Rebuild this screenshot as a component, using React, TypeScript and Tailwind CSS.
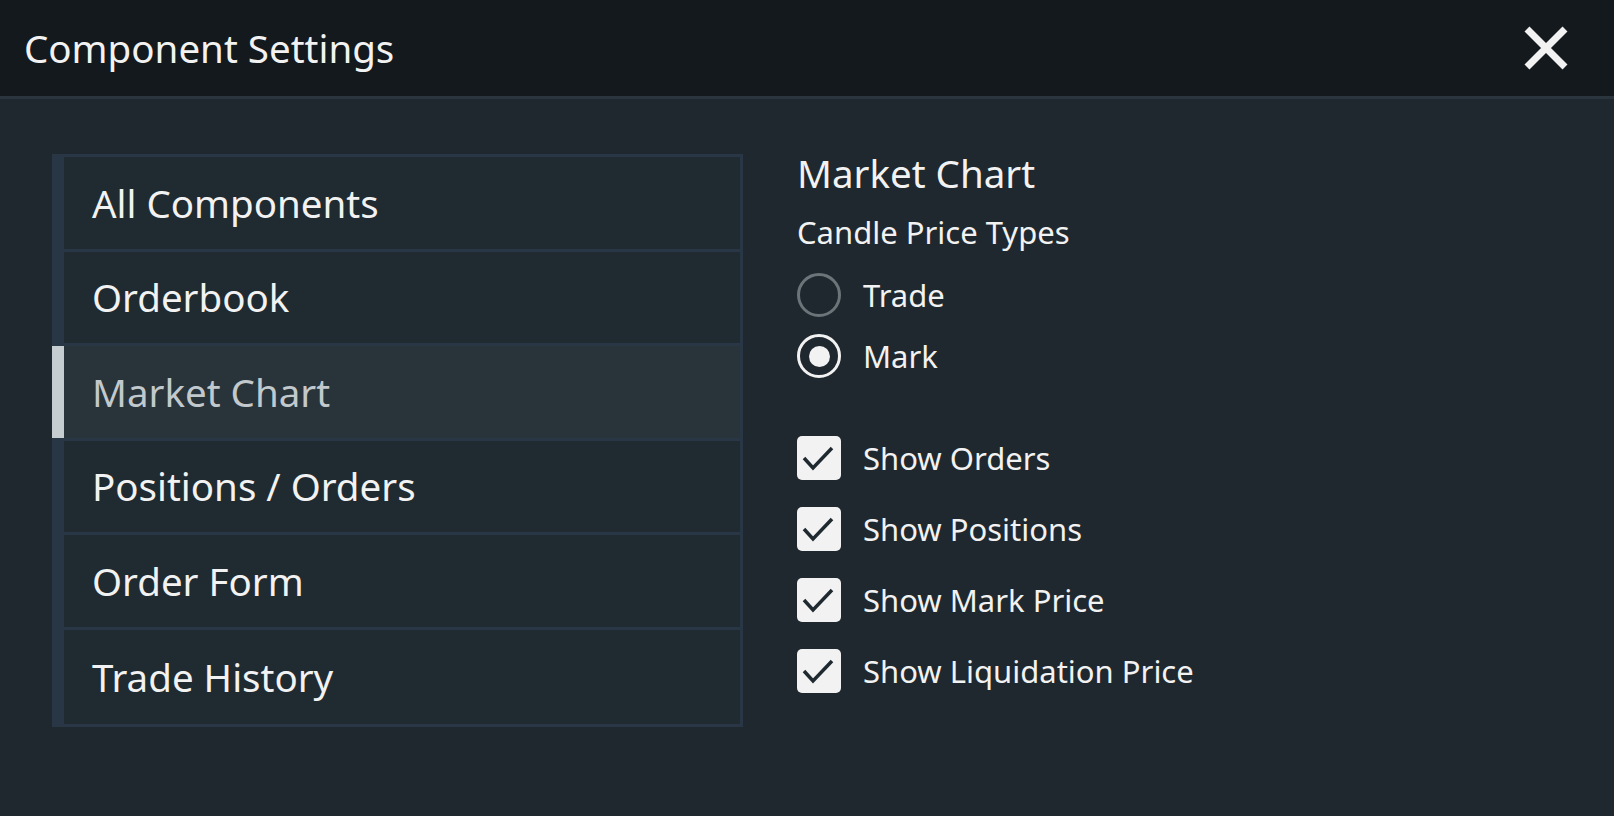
import React from "react";

const items = [
  "All Components",
  "Orderbook",
  "Market Chart",
  "Positions / Orders",
  "Order Form",
  "Trade History",
];

const toggles = [
  "Show Orders",
  "Show Positions",
  "Show Mark Price",
  "Show Liquidation Price",
];

const CloseIcon = () => (
  <svg width="46" height="46" viewBox="0 0 46 46" fill="none">
    <path d="M4 4 L42 42 M42 4 L4 42" stroke="#f2f2f2" strokeWidth="7" />
  </svg>
);

const Radio = ({ checked, label }: { checked: boolean; label: string }) => (
  <div className="flex h-[44px] items-center gap-[22px]">
    <div
      className={
        checked
          ? "flex size-[44px] items-center justify-center rounded-full border-[3px] border-[#f2f2f2]"
          : "size-[44px] rounded-full border-[3px] border-[#6b7478]"
      }
    >
      {checked && <div className="size-[21px] rounded-full bg-[#f2f2f2]" />}
    </div>
    <span className="text-[31px] leading-none text-[#f2f2f2]">{label}</span>
  </div>
);

const Checkbox = ({ label }: { label: string }) => (
  <div className="flex h-[44px] items-center gap-[22px]">
    <div className="size-[44px] rounded-[5px] bg-[#f2f2f2]">
      <svg width="44" height="44" viewBox="0 0 44 44" fill="none">
        <path d="M7 22 L16 32 L35 12" stroke="#1f2930" strokeWidth="3.5" />
      </svg>
    </div>
    <span className="text-[31px] leading-none text-[#f2f2f2]">{label}</span>
  </div>
);

export default function App() {
  const active = "Market Chart";

  return (
    <div
      className="h-[816px] w-full bg-[#1f282f] text-[#f2f2f2]"
      style={{ fontFamily: '"Noto Sans", "Open Sans", sans-serif' }}
    >
      <header className="flex h-[99px] items-center justify-between border-b-[3px] border-[#2a353e] bg-[#13191d] pl-[24px] pr-[45px]">
        <h1 className="text-[38.5px] font-normal leading-none">Component Settings</h1>
        <button className="flex items-center justify-center">
          <CloseIcon />
        </button>
      </header>

      <div className="flex items-start pl-[52px] pt-[51px]">
        <ul className="mt-[4px] w-[691px] divide-y-[3px] divide-[#283645] border-[3px] border-l-0 border-[#283645]">
          {items.map((item) => {
            const isActive = item === active;
            return (
              <li key={item} className="flex h-[94.5px]">
                <div className={isActive ? "w-[12px] bg-[#c5cdd1]" : "w-[12px] bg-[#283645]"} />
                <div
                  className={
                    isActive
                      ? "flex flex-1 items-center bg-[#29333a] pl-[28px] text-[38.5px] leading-none text-[#c2c9cd]"
                      : "flex flex-1 items-center bg-[#202a31] pl-[28px] text-[38.5px] leading-none text-[#f2f2f2]"
                  }
                >
                  {item}
                </div>
              </li>
            );
          })}
        </ul>

        <div className="ml-[54px] flex flex-col">
          <div className="flex h-[46px] items-center text-[38.5px] leading-none">Market Chart</div>
          <div className="mt-[18px] flex h-[36px] items-center text-[31px] leading-none">
            Candle Price Types
          </div>
          <div className="mt-[23px] flex flex-col gap-[17px]">
            <Radio checked={false} label="Trade" />
            <Radio checked={true} label="Mark" />
          </div>
          <div className="mt-[58px] flex flex-col gap-[27px]">
            {toggles.map((t) => (
              <Checkbox key={t} label={t} />
            ))}
          </div>
        </div>
      </div>
    </div>
  );
}
